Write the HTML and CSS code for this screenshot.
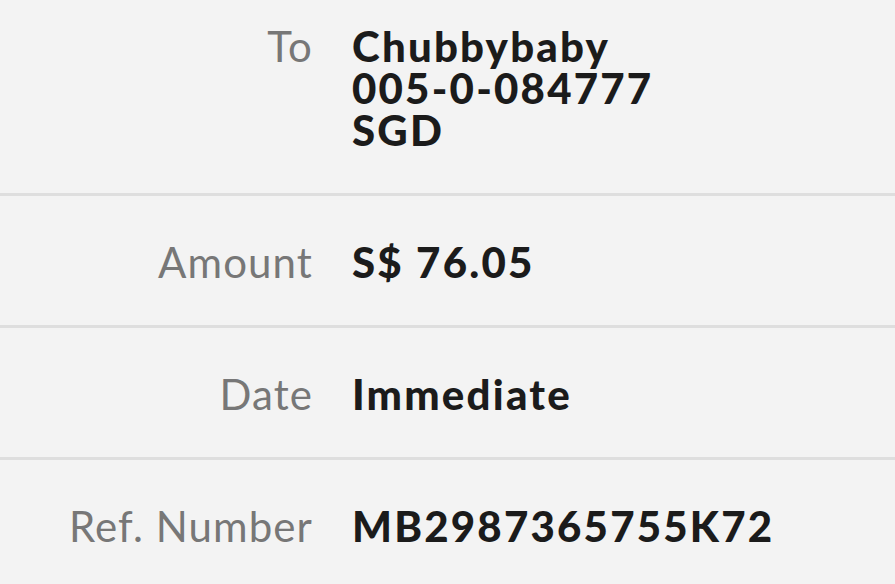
FILE: index.html
```html
<!DOCTYPE html>
<html lang="en">
<head>
  <meta charset="UTF-8" />
  <meta name="viewport" content="width=device-width, initial-scale=1.0"/>
  <title>Transfer details</title>
  <link rel="stylesheet" href="styles.css">
</head>
<body>

  <div class="details">

    <div class="row">
      <div class="label">To</div>
      <div class="value">
        Chubbybaby<br>
        005-0-084777<br>
        SGD
      </div>
    </div>

    <div class="row">
      <div class="label">Amount</div>
      <div class="value">S$ 76.05</div>
    </div>

    <div class="row">
      <div class="label">Date</div>
      <div class="value">Immediate</div>
    </div>

    <div class="row">
      <div class="label">Ref. Number</div>
      <div class="value">MB2987365755K72</div>
    </div>

  </div>

</body>
</html>
```

FILE: styles.css
```css
* {
  box-sizing: border-box;
}

body {
  margin: 0;
  font-family: Lato, 'Noto Sans', sans-serif;
  background: #f3f3f3;
  height: 100vh;
  overflow: hidden;
}

.row {
  display: grid;
  grid-template-columns: 313px 1fr;
  column-gap: 39px;
  padding: 45px 0 42px;
  border-bottom: 3px solid #dedede;
  font-size: 42px;
  line-height: 42px;
}

.row:first-child {
  padding-top: 25px;
}

.row:last-child {
  border-bottom: none;
}

.label {
  text-align: right;
  color: #777;
  font-weight: 400;
  letter-spacing: 1.1px;
}

.value {
  color: #1b1b1b;
  font-weight: 900;
  letter-spacing: 2.2px;
}
```
